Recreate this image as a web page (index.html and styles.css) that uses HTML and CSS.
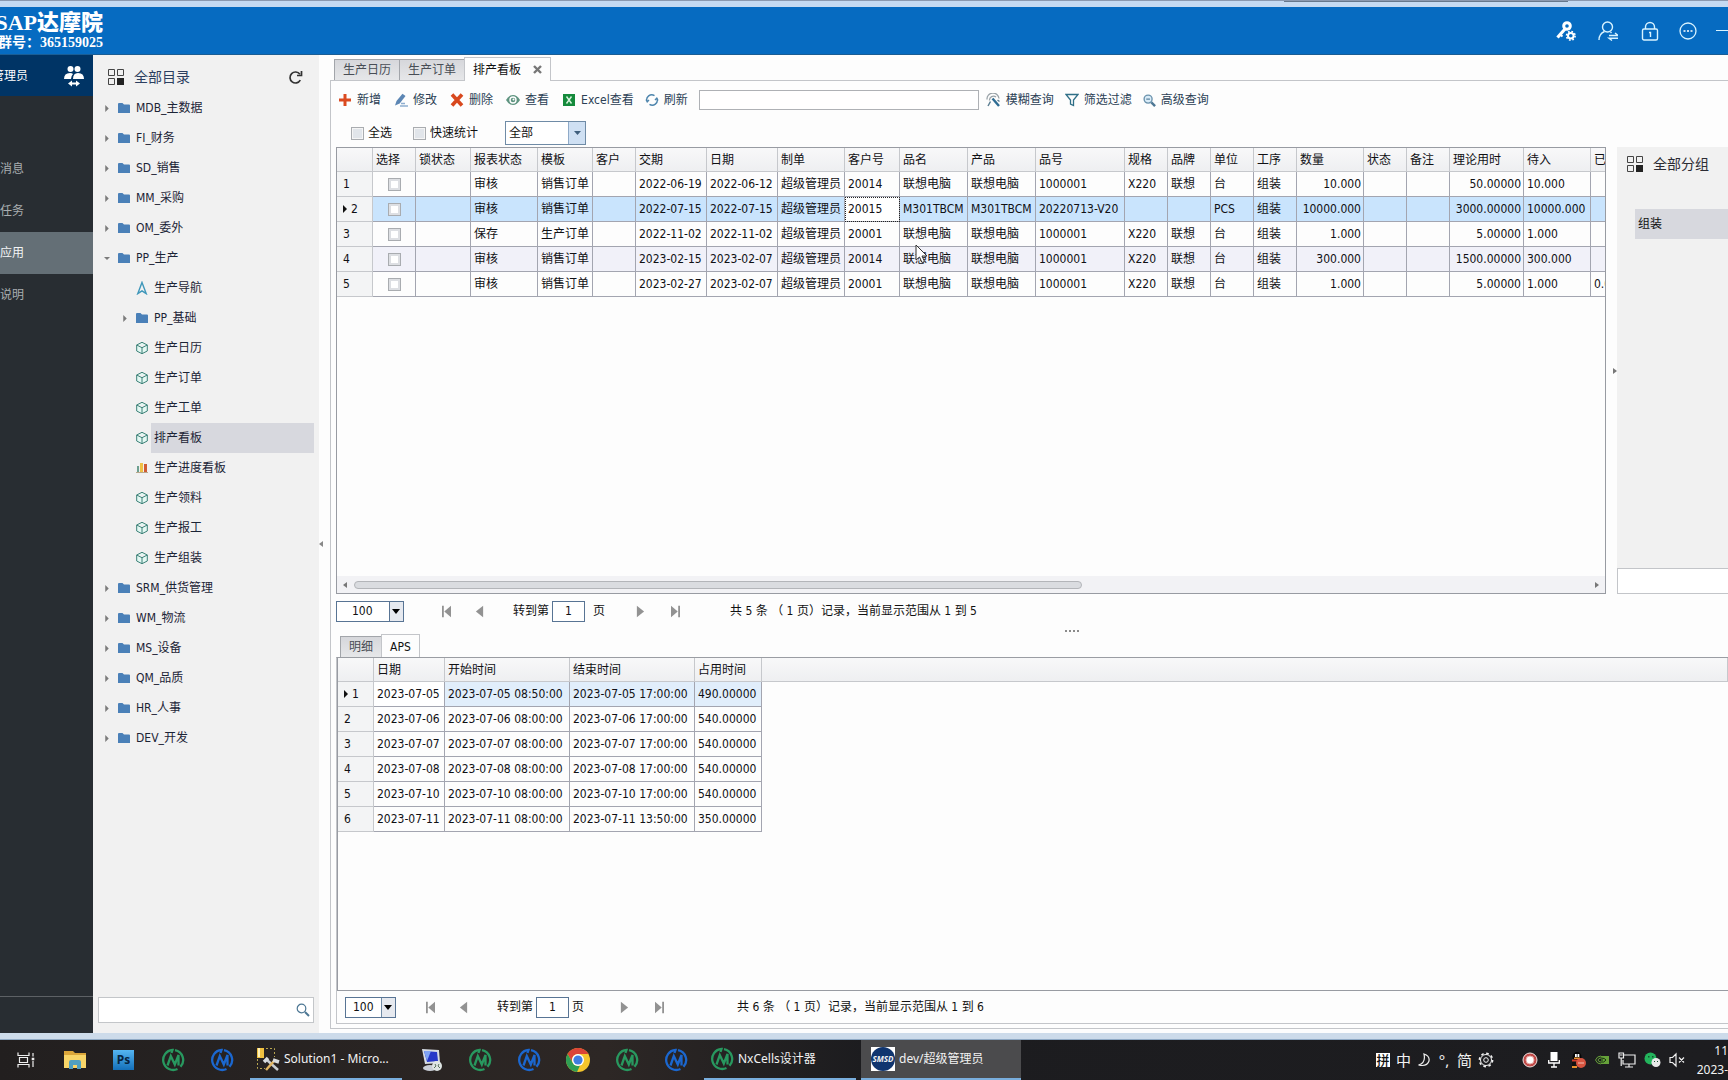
FILE: index.html
```html
<!DOCTYPE html>
<html lang="zh-CN">
<head>
<meta charset="utf-8">
<meta name="viewport" content="width=device-width, initial-scale=1">
<title>排产看板</title>
<link rel="stylesheet" href="styles.css">
</head>
<body>
<svg class="sprite" aria-hidden="true">
  <symbol id="folder" viewBox="0 0 12 12"><path fill="#4a80b8" d="M0 2q0-1 1-1h3.500l1.500 1.500h5q1 0 1 1V11H0z"/></symbol>
  <symbol id="caret" viewBox="0 0 5 8"><path fill="#7b7b7b" d="M.5 0 4.500 4 .5 8z"/></symbol>
  <symbol id="caret-down" viewBox="0 0 8 5"><path fill="#7b7b7b" d="M0 .5h8L4 4.500z"/></symbol>
  <symbol id="cube" viewBox="0 0 12 13"><path fill="#e4f8f3" stroke="#3b8077" d="M6 .8 11.300 3.500v6L6 12.200.7 9.500v-6zM.7 3.500 6 6.200l5.300-2.700M6 6.200v6"/></symbol>
  <symbol id="nav" viewBox="0 0 12 15"><path fill="none" stroke="#3f97ba" stroke-width="1.500" d="M6 1.500 10.500 13.500 6 10.500 1.500 13.500z"/></symbol>
  <symbol id="bars" viewBox="0 0 12 12"><path fill="#6d9f90" d="M1 4h2v6H1z"/><path fill="#efc146" d="M4 1h3v9H4z"/><path fill="#cf5b34" d="M8 2h3v8H8z"/><path fill="#b9a78b" d="M0 10h12v1H0z"/></symbol>
  <symbol id="blocks" viewBox="0 0 18 18"><path fill="none" stroke="#444" d="M1.500 1.500h6v6h-6zM10.500 1.500h6v6h-6zM1.500 10.500h6v6h-6z"/><path fill="#222" d="M10 10h7v7h-7z"/></symbol>
  <symbol id="glass" viewBox="0 0 14 14"><circle cx="5.500" cy="5.500" r="4.300" fill="none" stroke="#4d7794" stroke-width="1.200"/><path stroke="#4d7794" stroke-width="2" d="m9 9 4 4"/></symbol>
  <symbol id="first" viewBox="0 0 10 13"><path fill="#929292" d="M0 0h2v13H0zM10 0v13L2.500 6.500z"/></symbol>
  <symbol id="prev" viewBox="0 0 10 13"><path fill="#929292" d="M9 0v13L1 6.500z"/></symbol>
  <symbol id="next" viewBox="0 0 10 13"><path fill="#929292" d="M1 0v13l8-6.500z"/></symbol>
  <symbol id="last" viewBox="0 0 10 13"><path fill="#929292" d="M8 0h2v13H8zM0 0v13l7.500-6.500z"/></symbol>
  <symbol id="nx" viewBox="0 0 24 24"><path fill="none" stroke="currentColor" stroke-width="2.300" d="M16.500 21A10 10 0 1 1 11.500 2L10.500 5M14 2.200A10 10 0 0 1 19.500 18.800M6.500 17.500 9.800 8l4 8.500L17.500 7v10.500"/></symbol>
  <symbol id="gear" viewBox="0 0 16 16"><circle cx="8" cy="8" r="5.500" fill="none" stroke="currentColor"/><circle cx="8" cy="8" r="2.300" fill="none" stroke="currentColor"/><circle cx="8" cy="8" r="6.600" fill="none" stroke="currentColor" stroke-width="1.600" stroke-dasharray="2.590 2.590"/></symbol>
</svg>

<div class="window-edge"><span class="edge-shadow"></span></div>
<header class="titlebar">
  <div class="brand"><strong>SAP达摩院</strong><span>QQ群号：365159025</span></div>
  <div class="title-actions">
    <button aria-label="权限设置"><svg width="20" height="20" viewBox="0 0 20 20"><circle cx="11" cy="5" r="3.300" fill="none" stroke="#fff" stroke-width="3"/><path d="M9 8 1.500 16.500" stroke="#fff" stroke-width="3.200"/><path d="m3.500 13 3 2.500" stroke="#fff" stroke-width="2"/><circle cx="14.800" cy="14.800" r="5.800" fill="#066bc1"/><circle cx="14.800" cy="14.800" r="2.800" fill="none" stroke="#fff" stroke-width="2"/><circle cx="14.800" cy="14.800" r="4.300" fill="none" stroke="#fff" stroke-width="1.600" stroke-dasharray="1.690 1.690"/></svg></button>
    <button aria-label="切换用户"><svg width="20" height="20" viewBox="0 0 20 20" fill="none" stroke="#d8f3ff" stroke-width="1.400"><circle cx="9.500" cy="6" r="5"/><path d="M1 19q0-6 5.500-8.500M12.500 11l1 1M11 14.500h9l-3-2.500M20 17.200h-9l3 2.300"/></svg></button>
    <button aria-label="锁定"><svg width="18" height="20" viewBox="0 0 18 20" fill="none" stroke="#d8f3ff" stroke-width="1.400"><rect x="1.500" y="8" width="15" height="11" rx="1.500"/><path d="M4.500 8V6a4.500 4.500 0 0 1 9 0v2M8 11.500h1.500V16"/></svg></button>
    <button aria-label="更多"><svg width="18" height="18" viewBox="0 0 18 18"><circle cx="9" cy="9" r="8" fill="none" stroke="#d8f3ff" stroke-width="1.300"/><path fill="#fff" d="M4.500 8.200h2v1.600h-2zM8 8.200h2v1.600H8zM11.500 8.200h2v1.600h-2z"/></svg></button>
    <button class="minimize" aria-label="最小化"><i></i></button>
  </div>
</header>

<main class="shell">
  <nav class="rail">
    <div class="rail-user"><span>超级管理员</span><svg width="20" height="22" viewBox="0 0 20 22" fill="#fff"><circle cx="6.500" cy="4" r="3"/><circle cx="13.500" cy="4" r="3"/><path d="M0 14q0-6 6-6 2 0 3 1-2 2-2 5zM9 14q0-6 5-6 6 0 6 6z"/><path d="M4 18.500 8 15.500v2h4v-2l4 3-4 3v-2H8v2z"/></svg></div>
    <ul class="rail-list">
      <li><a href="#">我的消息</a></li>
      <li><a href="#">我的任务</a></li>
      <li><a href="#" class="active">我的应用</a></li>
      <li><a href="#">使用说明</a></li>
    </ul>
    <div class="rail-foot"></div>
  </nav>

  <aside class="catalog">
    <div class="catalog-head"><svg width="18" height="18"><use href="#blocks"/></svg><h2>全部目录</h2><button aria-label="刷新目录"><svg width="15" height="15" viewBox="0 0 15 15" fill="none" stroke="#333" stroke-width="1.700"><path d="M12.300 10.200a5.500 5.500 0 1 1-.4-6"/><path d="M13.500 1v4.500H9"/></svg></button></div>
    <ul class="tree">
      <li><a href="#"><svg class="arrow"><use href="#caret"/></svg><svg class="node"><use href="#folder"/></svg><span>MDB_主数据</span></a></li>
      <li><a href="#"><svg class="arrow"><use href="#caret"/></svg><svg class="node"><use href="#folder"/></svg><span>FI_财务</span></a></li>
      <li><a href="#"><svg class="arrow"><use href="#caret"/></svg><svg class="node"><use href="#folder"/></svg><span>SD_销售</span></a></li>
      <li><a href="#"><svg class="arrow"><use href="#caret"/></svg><svg class="node"><use href="#folder"/></svg><span>MM_采购</span></a></li>
      <li><a href="#"><svg class="arrow"><use href="#caret"/></svg><svg class="node"><use href="#folder"/></svg><span>OM_委外</span></a></li>
      <li><a href="#"><svg class="arrow"><use href="#caret-down"/></svg><svg class="node"><use href="#folder"/></svg><span>PP_生产</span></a>
        <ul>
          <li><a href="#"><i class="arrow"></i><svg class="node"><use href="#nav"/></svg><span>生产导航</span></a></li>
          <li><a href="#"><svg class="arrow"><use href="#caret"/></svg><svg class="node"><use href="#folder"/></svg><span>PP_基础</span></a></li>
          <li><a href="#"><i class="arrow"></i><svg class="node"><use href="#cube"/></svg><span>生产日历</span></a></li>
          <li><a href="#"><i class="arrow"></i><svg class="node"><use href="#cube"/></svg><span>生产订单</span></a></li>
          <li><a href="#"><i class="arrow"></i><svg class="node"><use href="#cube"/></svg><span>生产工单</span></a></li>
          <li><a href="#" class="selected"><i class="arrow"></i><svg class="node"><use href="#cube"/></svg><span>排产看板</span></a></li>
          <li><a href="#"><i class="arrow"></i><svg class="node"><use href="#bars"/></svg><span>生产进度看板</span></a></li>
          <li><a href="#"><i class="arrow"></i><svg class="node"><use href="#cube"/></svg><span>生产领料</span></a></li>
          <li><a href="#"><i class="arrow"></i><svg class="node"><use href="#cube"/></svg><span>生产报工</span></a></li>
          <li><a href="#"><i class="arrow"></i><svg class="node"><use href="#cube"/></svg><span>生产组装</span></a></li>
        </ul>
      </li>
      <li><a href="#"><svg class="arrow"><use href="#caret"/></svg><svg class="node"><use href="#folder"/></svg><span>SRM_供货管理</span></a></li>
      <li><a href="#"><svg class="arrow"><use href="#caret"/></svg><svg class="node"><use href="#folder"/></svg><span>WM_物流</span></a></li>
      <li><a href="#"><svg class="arrow"><use href="#caret"/></svg><svg class="node"><use href="#folder"/></svg><span>MS_设备</span></a></li>
      <li><a href="#"><svg class="arrow"><use href="#caret"/></svg><svg class="node"><use href="#folder"/></svg><span>QM_品质</span></a></li>
      <li><a href="#"><svg class="arrow"><use href="#caret"/></svg><svg class="node"><use href="#folder"/></svg><span>HR_人事</span></a></li>
      <li><a href="#"><svg class="arrow"><use href="#caret"/></svg><svg class="node"><use href="#folder"/></svg><span>DEV_开发</span></a></li>
    </ul>
    <div class="catalog-search"><input type="text" aria-label="搜索目录"><svg width="14" height="14"><use href="#glass"/></svg></div>
  </aside>

  <div class="splitter-v"><svg width="4" height="6" viewBox="0 0 4 6"><path fill="#888" d="M4 0v6L0 3z"/></svg></div>

  <section class="work">
    <div class="tabs">
      <button>生产日历</button><button>生产订单</button><button class="on">排产看板<svg width="9" height="9" viewBox="0 0 9 9"><path stroke="#777" stroke-width="2.400" d="m1 1 7 7M8 1 1 8"/></svg></button>
    </div>
    <div class="page">
      <div class="toolbar">
        <div class="tools">
          <button><svg width="14" height="14" viewBox="0 0 14 14"><path stroke="#db4a20" stroke-width="3" d="M7 1v12M1 7h12"/></svg>新增</button>
          <button><svg width="14" height="14" viewBox="0 0 14 14"><path fill="#5c86b4" d="M1 12.500 2.500 8 8.500.8l3 2.200-5.800 7.500z"/><path stroke="#8eaed0" stroke-width="1.500" d="M7 10.500h4M6 13h8"/></svg>修改</button>
          <button><svg width="14" height="14" viewBox="0 0 14 14"><path stroke="#d8481e" stroke-width="3.600" d="m2 1.500 10 11M12 1.500l-10 11"/></svg>删除</button>
          <button><svg width="14" height="14" viewBox="0 0 14 14"><path fill="#5f9480" d="M0 7q3-5 7-5t7 5q-3 5-7 5T0 7z"/><circle cx="7" cy="7" r="3" fill="#5f9480" stroke="#fff" stroke-width="1.400"/><circle cx="7.500" cy="6.500" r="1" fill="#fff"/></svg>查看</button>
          <button><svg width="14" height="14" viewBox="0 0 14 14"><path fill="#158a3c" d="M1 1h12v12H1z"/><path stroke="#d9f5df" stroke-width="1.400" d="m4.500 3.500 5 7M9.500 3.500l-5 7"/></svg>Excel查看</button>
        </div>
        <button><svg width="14" height="14" viewBox="0 0 14 14" fill="none" stroke="#4c84ac" stroke-width="1.400"><path d="M2 8.500A5 5 0 0 1 9.500 2.700M12 5.500A5 5 0 0 1 4.500 11.300M1 6.500l1.200 2.300L4 7M13 7.500l-1.200-2.300L10 7"/></svg>刷新</button>
        <input class="query" type="text" aria-label="查询内容">
        <button><svg width="15" height="14" viewBox="0 0 15 14"><path d="M1 6.500a6 6 0 0 1 12-1M3.500 7.500A4 4 0 0 1 10 4" fill="none" stroke="#9aa3a8" stroke-width="1.300"/><path d="m6.500 5.500 6.500 7.500" stroke="#2e6c93" stroke-width="2.400"/><path d="M4.500 8.500 2 13M11.500 7l2 1.500" stroke="#5c7f93" stroke-width="1.500"/></svg>模糊查询</button>
        <button><svg width="14" height="14" viewBox="0 0 14 14"><path fill="none" stroke="#2f6f87" stroke-width="1.300" d="M1 1.500h12L8.500 7v5.500L5.500 11V7z"/></svg>筛选过滤</button>
        <button><svg width="13" height="13" viewBox="0 0 14 14"><circle cx="5.500" cy="5.500" r="4.300" fill="#d9ecf8" stroke="#6c93ad" stroke-width="1.500"/><path stroke="#4d7794" stroke-width="1.200" d="M3.500 5.500h4"/><path stroke="#4d7794" stroke-width="2.600" d="m9 9 4 4"/></svg>高级查询</button>
      </div>
      <div class="options">
        <label><input type="checkbox">全选</label>
        <label><input type="checkbox">快速统计</label>
        <span class="combo scope"><select aria-label="范围"><option>全部</option></select><svg width="7" height="4" viewBox="0 0 7 4"><path fill="#3f5f7d" d="M0 0h7L3.500 4z"/></svg></span>
      </div>

      <div class="upper">
        <div class="grid">
          <div class="grid-view">
          <table class="orders">
            <colgroup><col class="w36"><col class="w43"><col class="w55"><col class="w67"><col class="w55"><col class="w43"><col class="w71"><col class="w71"><col class="w67"><col class="w55"><col class="w68"><col class="w68"><col class="w89"><col class="w43"><col class="w43"><col class="w43"><col class="w43"><col class="w67"><col class="w43"><col class="w43"><col class="w74"><col class="w67"><col class="w67"></colgroup>
            <thead><tr><th></th><th>选择</th><th>锁状态</th><th>报表状态</th><th>模板</th><th>客户</th><th>交期</th><th>日期</th><th>制单</th><th>客户号</th><th>品名</th><th>产品</th><th>品号</th><th>规格</th><th>品牌</th><th>单位</th><th>工序</th><th>数量</th><th>状态</th><th>备注</th><th>理论用时</th><th>待入</th><th>已入</th></tr></thead>
            <tbody>
              <tr><th>1</th><td class="c"><input type="checkbox" aria-label="选择第1行"></td><td></td><td>审核</td><td>销售订单</td><td></td><td>2022-06-19</td><td>2022-06-12</td><td>超级管理员</td><td>20014</td><td>联想电脑</td><td>联想电脑</td><td>1000001</td><td>X220</td><td>联想</td><td>台</td><td>组装</td><td class="r">10.000</td><td></td><td></td><td class="r">50.00000</td><td>10.000</td><td></td></tr>
              <tr class="current"><th><i class="pointer"></i>2</th><td class="c"><input type="checkbox" aria-label="选择第2行"></td><td></td><td>审核</td><td>销售订单</td><td></td><td>2022-07-15</td><td>2022-07-15</td><td>超级管理员</td><td class="focus">20015</td><td>M301TBCM</td><td>M301TBCM</td><td>20220713-V20</td><td></td><td></td><td>PCS</td><td>组装</td><td class="r">10000.000</td><td></td><td></td><td class="r">3000.00000</td><td>10000.000</td><td></td></tr>
              <tr><th>3</th><td class="c"><input type="checkbox" aria-label="选择第3行"></td><td></td><td>保存</td><td>生产订单</td><td></td><td>2022-11-02</td><td>2022-11-02</td><td>超级管理员</td><td>20001</td><td>联想电脑</td><td>联想电脑</td><td>1000001</td><td>X220</td><td>联想</td><td>台</td><td>组装</td><td class="r">1.000</td><td></td><td></td><td class="r">5.00000</td><td>1.000</td><td></td></tr>
              <tr class="hover"><th>4</th><td class="c"><input type="checkbox" aria-label="选择第4行"></td><td></td><td>审核</td><td>销售订单</td><td></td><td>2023-02-15</td><td>2023-02-07</td><td>超级管理员</td><td>20014</td><td>联想电脑</td><td>联想电脑</td><td>1000001</td><td>X220</td><td>联想</td><td>台</td><td>组装</td><td class="r">300.000</td><td></td><td></td><td class="r">1500.00000</td><td>300.000</td><td></td></tr>
              <tr><th>5</th><td class="c"><input type="checkbox" aria-label="选择第5行"></td><td></td><td>审核</td><td>销售订单</td><td></td><td>2023-02-27</td><td>2023-02-07</td><td>超级管理员</td><td>20001</td><td>联想电脑</td><td>联想电脑</td><td>1000001</td><td>X220</td><td>联想</td><td>台</td><td>组装</td><td class="r">1.000</td><td></td><td></td><td class="r">5.00000</td><td>1.000</td><td>0.000</td></tr>
            </tbody>
          </table>
          <svg class="cursor" width="14" height="20" viewBox="0 0 14 20"><path fill="#fff" stroke="#333" d="M1 1v15l3.500-3 2.500 5.500 2.500-1-2.500-5.500h5z"/></svg>
          </div>
          <div class="hscroll"><svg width="4" height="6" viewBox="0 0 4 6"><path fill="#777" d="M4 0v6L0 3z"/></svg><div class="track"><i></i></div><svg width="4" height="6" viewBox="0 0 4 6"><path fill="#777" d="M0 0v6l4-3z"/></svg></div>
        </div>
        <div class="collapse"><svg width="4" height="6" viewBox="0 0 4 6"><path fill="#777" d="M0 0v6l4-3z"/></svg></div>
        <aside class="groups">
          <div class="groups-head"><svg width="18" height="18"><use href="#blocks"/></svg><h2>全部分组</h2></div>
          <a href="#">组装</a>
          <input type="text" aria-label="搜索分组">
        </aside>
      </div>

      <div class="pager">
        <span class="combo size wide"><select aria-label="每页条数"><option>100</option></select><svg width="8" height="5" viewBox="0 0 8 5"><path d="M0 0h8L4 5z"/></svg></span>
        <button aria-label="首页"><svg><use href="#first"/></svg></button><button aria-label="上一页"><svg><use href="#prev"/></svg></button>
        <label class="spaced">转到第<input type="text" value="1">页</label>
        <button aria-label="下一页"><svg><use href="#next"/></svg></button><button aria-label="末页"><svg><use href="#last"/></svg></button>
        <span class="total">共 5 条 （ 1 页）记录，当前显示范围从 1 到 5</span>
      </div>
      <div class="splitter-h"><i></i><i></i><i></i><i></i></div>

      <div class="lower">
        <div class="tabs sub"><button>明细</button><button class="on">APS</button></div>
        <div class="lower-box">
          <div class="detail">
            <table class="aps">
              <colgroup><col class="w36"><col class="w71"><col class="w125"><col class="w125"><col class="w67"><col></colgroup>
              <thead><tr><th></th><th>日期</th><th>开始时间</th><th>结束时间</th><th>占用时间</th><th></th></tr></thead>
              <tbody>
                <tr class="soft"><th><i class="pointer"></i>1</th><td class="plain">2023-07-05</td><td>2023-07-05 08:50:00</td><td>2023-07-05 17:00:00</td><td>490.00000</td></tr>
                <tr><th>2</th><td>2023-07-06</td><td>2023-07-06 08:00:00</td><td>2023-07-06 17:00:00</td><td>540.00000</td></tr>
                <tr><th>3</th><td>2023-07-07</td><td>2023-07-07 08:00:00</td><td>2023-07-07 17:00:00</td><td>540.00000</td></tr>
                <tr><th>4</th><td>2023-07-08</td><td>2023-07-08 08:00:00</td><td>2023-07-08 17:00:00</td><td>540.00000</td></tr>
                <tr><th>5</th><td>2023-07-10</td><td>2023-07-10 08:00:00</td><td>2023-07-10 17:00:00</td><td>540.00000</td></tr>
                <tr><th>6</th><td>2023-07-11</td><td>2023-07-11 08:00:00</td><td>2023-07-11 13:50:00</td><td>350.00000</td></tr>
              </tbody>
            </table>
          </div>
          <div class="pager inset">
            <span class="combo size"><select aria-label="每页条数"><option>100</option></select><svg width="8" height="5" viewBox="0 0 8 5"><path d="M0 0h8L4 5z"/></svg></span>
            <button aria-label="首页"><svg><use href="#first"/></svg></button><button aria-label="上一页"><svg><use href="#prev"/></svg></button>
            <label>转到第<input type="text" value="1">页</label>
            <button aria-label="下一页"><svg><use href="#next"/></svg></button><button aria-label="末页"><svg><use href="#last"/></svg></button>
            <span class="total">共 6 条 （ 1 页）记录，当前显示范围从 1 到 6</span>
          </div>
        </div>
      </div>
    </div>
  </section>
</main>
<div class="window-foot"></div>

<footer class="taskbar">
  <button class="app" aria-label="任务视图"><svg width="18" height="16" viewBox="0 0 18 16" fill="none" stroke="#eee" stroke-width="1.200"><path d="M1 .5v3h11v-3M1 15.500v-3h11v3M2.500 5.500h8v5h-8zM16 1v3.500M16 9v6"/><path stroke-width="2.500" d="M14.700 7h2.600"/></svg></button>
  <button class="app" aria-label="文件资源管理器"><svg width="22" height="20" viewBox="0 0 22 20"><path fill="#dba63a" d="M0 1h9l2 2h11v5H0z"/><path fill="#f8d568" d="M0 5h22v13H0z"/><path fill="#4f9fc0" d="M5 19v-7q0-2 2-2h8q2 0 2 2v7h-4v-4H9v4z"/></svg></button>
  <button class="app" aria-label="Photoshop"><span class="ps">Ps</span></button>
  <button class="app green" aria-label="NxCells"><svg><use href="#nx"/></svg></button>
  <button class="app blue" aria-label="NxCells"><svg><use href="#nx"/></svg></button>
  <button class="app open"><svg width="24" height="24" viewBox="0 0 24 24"><path fill="#f0c040" d="M1 1h7v10H1z"/><path fill="#fff2b8" d="M2 1h2v9H2z"/><path fill="none" stroke="#b8a650" stroke-dasharray="2 2" d="M10 1.500h8.500V10M1.500 12v9.500H9"/><path stroke="#c9ced2" stroke-width="2.500" d="m11 13 11 10"/><path stroke="#e1b562" stroke-width="2.500" d="m10 23 8-9"/><path stroke="#d8dcdf" stroke-width="3.500" d="m8 15 4-4M17 13l6 2"/></svg><span>Solution1 - Micro...</span></button>
  <button class="app" aria-label="远程桌面"><svg width="24" height="24" viewBox="0 0 24 24"><path fill="#d5dbe3" d="m3 1 17 1 1 13-15 1z"/><path fill="#2638c8" d="m5 3 13 1 1 9-11 1z"/><path fill="#7fa3f4" d="m5 3 7 0-4 10z"/><ellipse cx="11" cy="20" rx="7" ry="3" fill="#c9ced6"/><circle cx="18" cy="18" r="5" fill="#dfe5e4"/><path fill="none" stroke="#56705c" d="m15 20 2-2-1-2M20 16l-1 2 2 2"/></svg></button>
  <button class="app green" aria-label="NxCells"><svg><use href="#nx"/></svg></button>
  <button class="app blue" aria-label="NxCells"><svg><use href="#nx"/></svg></button>
  <button class="app" aria-label="Chrome"><svg width="24" height="24" viewBox="0 0 24 24"><circle cx="12" cy="12" r="12" fill="#f5c52c"/><path fill="#db4437" d="M1.600 6A12 12 0 0 1 22.400 6H12a6 6 0 0 0-5.500 8.500z"/><path fill="#2f9e54" d="M1.600 6l5.200 9A6 6 0 0 0 14 17.600L11 24A12 12 0 0 1 1.600 6z"/><circle cx="12" cy="12" r="6" fill="#fff"/><circle cx="12" cy="12" r="4.600" fill="#3f7de0"/></svg></button>
  <button class="app green" aria-label="NxCells"><svg><use href="#nx"/></svg></button>
  <button class="app blue" aria-label="NxCells"><svg><use href="#nx"/></svg></button>
  <button class="app open green"><svg><use href="#nx"/></svg><span>NxCells设计器</span></button>
  <button class="app open focused"><span class="badge"><span>SMSD</span></span><span>dev/超级管理员</span></button>
  <div class="ime"><b>拼</b><span>中</span><svg width="14" height="14" viewBox="0 0 14 14"><path fill="none" stroke="#eee" stroke-width="1.200" d="M7 1q6 2 5 7-2 6-10.500 4Q9 10 7 1z"/></svg><span>°,</span><span>简</span><svg width="16" height="16"><use href="#gear"/></svg></div>
  <div class="tray">
    <svg width="16" height="16" viewBox="0 0 16 16"><circle cx="8" cy="8" r="7" fill="#c14a48" stroke="#eee1df"/><circle cx="8" cy="8" r="4" fill="#fff" stroke="#e9a9a5"/></svg>
    <svg width="16" height="16" viewBox="0 0 16 16"><path fill="#fff" d="M4.500 0h7v9h-7z"/><path fill="none" stroke="#fff" stroke-width="1.300" d="M2.700 8v3h10.600V8M8 11v4M5 15h6"/></svg>
    <svg width="16" height="16" viewBox="0 0 16 16"><ellipse cx="7" cy="5" rx="4.500" ry="5" fill="#050505"/><path fill="#111" d="M2 8h10v6H2z"/><path fill="#fff" d="M5 2h1.800v3H5zM7.500 2h1.800v3H7.500z"/><path fill="#e8912d" d="M4 5.500h6V7H4zM2 14h5v2H2z"/><path fill="#d33c2c" d="M2 7.500h9v2H2z"/><circle cx="11" cy="11" r="5" fill="#d75440"/><path stroke="#f3c0b4" d="M8 11h6"/></svg>
    <svg width="16" height="16" viewBox="0 0 16 16"><path fill="#67a23a" d="M7 4h8v8H7z"/><path fill="none" stroke="#67a23a" d="M7 4Q3 4 1.500 8 3 12 7 12M7 6Q4.500 6 4 8q.5 2 3 2"/><path fill="none" stroke="#173010" d="M7 6q4 0 5 2-2 3-5 2M7 8h2"/></svg>
    <svg width="18" height="16" viewBox="0 0 18 16" fill="none" stroke="#eee" stroke-width="1.200"><path d="M6 3h11v9H5V8M11 12v3M7 15h8M1 1h4.500v5H1zM3.200 6v8M2 3h2.500"/></svg>
    <svg width="17" height="16" viewBox="0 0 17 16"><circle cx="6.500" cy="6.500" r="6" fill="#23b45c"/><circle cx="12" cy="10.500" r="4.500" fill="#e8e8e8"/><path fill="#14522e" d="M4 4h1.500v1.500H4zM8 4h1.500v1.500H8zM10 9h1v1h-1zM13 9h1v1h-1z"/></svg>
    <svg width="16" height="16" viewBox="0 0 16 16" fill="none" stroke="#eee" stroke-width="1.200"><path d="M1 5.500h2.500L7 2v12l-3.500-3.500H1zM10 5.500l5 5M15 5.500l-5 5"/></svg>
  </div>
  <div class="clock"><time>11</time><time>2023-</time></div>
</footer>
</body>
</html>
```
FILE: styles.css
```css
* { box-sizing: border-box; }
html, body { height: 100%; margin: 0; }
body {
  display: flex;
  flex-direction: column;
  overflow: hidden;
  background: #fdfdfd;
  color: #111;
  font: 12px/16px "DejaVu Sans Condensed", "DejaVu Sans", "Noto Sans CJK SC", sans-serif;
}
button, input, select { font: inherit; color: inherit; margin: 0; }
button { border: 0; background: none; padding: 0; display: flex; align-items: center; white-space: nowrap; }
a { color: inherit; text-decoration: none; }
ul { list-style: none; margin: 0; padding: 0; }
h2 { font-size: 14px; font-weight: 400; line-height: 20px; margin: 0; white-space: nowrap; }
svg { flex: none; display: block; }
.sprite { position: absolute; width: 0; height: 0; }

/* Window frame */
.window-edge { flex: none; height: 7px; background: #c4daf2; border-top: 1px solid #8a99b0; display: flex; justify-content: flex-end; padding-right: 160px; }
.edge-shadow { width: 284px; height: 1px; background: #65788d; }
.window-foot { flex: none; height: 7px; background: #cddbea; border-bottom: 1px solid #8fa9c4; }
.titlebar { flex: none; height: 48px; background: #066bc1; border-bottom: 1px solid #1a5d94; display: flex; justify-content: space-between; align-items: center; color: #fff; overflow: hidden; }
.brand { width: 103px; display: flex; flex-direction: column; align-items: flex-end; font-family: "Liberation Serif", "Noto Sans CJK SC", serif; font-weight: 700; white-space: nowrap; }
.brand strong { font-size: 22px; line-height: 24px; }
.brand span { font-size: 14px; line-height: 16px; }
.title-actions { display: flex; align-items: center; gap: 22px; }
.title-actions button { width: 20px; height: 24px; justify-content: center; }
.title-actions button:nth-last-child(-n+2) { margin-left: -4px; }
.title-actions .minimize { width: 12px; }
.minimize i { width: 12px; height: 1px; background: #d8f3ff; }

.shell { flex: 1; min-height: 0; display: flex; }

/* Left rail */
.rail { width: 93px; flex: none; background: #282d32; color: #a9adb0; display: flex; flex-direction: column; overflow: hidden; }
.rail-user { height: 41px; background: #003465; color: #fff; display: flex; align-items: center; justify-content: flex-end; gap: 36px; padding-right: 9px; white-space: nowrap; }
.rail-list { margin-top: 52px; flex: 1; }
.rail-list a { display: flex; align-items: center; justify-content: flex-end; height: 42px; padding-right: 69px; white-space: nowrap; }
.rail-list .active { background: #646f76; color: #f3f4f5; }
.rail-foot { height: 37px; border-top: 1px solid #5d6165; }

/* Catalog tree */
.catalog { width: 226px; flex: none; background: #f1f1f1; display: flex; flex-direction: column; padding: 0 5px 10px; color: #1c2436; }
.catalog-head { display: flex; align-items: center; height: 38px; margin-top: 3px; padding: 0 11px 0 9px; gap: 9px; }
.catalog-head h2 { flex: 1; color: #2c3f60; }
.tree { flex: 1; margin-top: -3px; }
.tree a { display: flex; align-items: center; height: 30px; padding-left: 6px; white-space: nowrap; }
.tree ul a { padding-left: 24px; }
.tree .arrow { width: 6px; height: 7px; margin-right: 8px; }
.tree .node { width: 12px; height: 14px; margin-right: 3px; }
.tree span { flex: 1; line-height: 30px; padding-left: 3px; }
.tree .selected span { background: #d7d8de; }
.catalog-search { display: flex; align-items: center; height: 26px; border: 1px solid #c3c6c9; background: #fff; padding-right: 3px; }
.catalog-search input { flex: 1; min-width: 0; border: 0; background: none; outline: 0; }
.splitter-v { width: 11px; flex: none; display: flex; align-items: center; }

/* Workspace */
.work { flex: 1; min-width: 0; display: flex; flex-direction: column; padding: 2px 0 4px; }
.tabs { display: flex; align-items: flex-end; height: 24px; padding-left: 4px; flex: none; border-bottom: 1px solid #c3c5c9; }
.tabs button { height: 21px; padding: 0 8px; border: 1px solid #a2a5aa; border-width: 1px 1px 0; background: linear-gradient(#d6d7db, #e6e7e9); color: #484d55; }
.tabs button + button { margin-left: -1px; }
.tabs .on { height: 24px; margin-bottom: -1px; background: #fdfdfd; border-color: #c3c5c9; color: #111; gap: 12px; }
.page { flex: 1; min-height: 0; display: flex; flex-direction: column; border: 1px solid #c3c5c9; border-width: 0 0 1px 1px; padding: 0 0 4px 5px; }
.toolbar { display: flex; align-items: center; gap: 11px; height: 38px; padding-left: 2px; color: #2b3f55; flex: none; }
.tools { display: flex; gap: 13px; }
.toolbar button { gap: 5px; }
.query { width: 280px; height: 20px; border: 1px solid #aeb1b5; background: #fff; outline: 0; margin-right: -4px; }
.options { display: flex; align-items: center; height: 28px; padding-left: 15px; flex: none; }
.options label { display: flex; align-items: center; gap: 4px; margin-right: 21px; }
input[type="checkbox"] { appearance: none; width: 13px; height: 13px; border: 1px solid #a9acb0; background: #fff; box-shadow: inset 0 0 0 2px #dddfe3; flex: none; }
.options input[type="checkbox"] { background: #e1e5ea; box-shadow: inset 0 0 0 1px #f5f5f5; }
.combo { position: relative; display: inline-flex; flex: none; }
.combo select { appearance: none; border: 1px solid #6f8ba6; border-radius: 0; background: #fff; outline: 0; }
.combo svg { position: absolute; pointer-events: none; }
.scope { margin-left: 6px; }
.scope select { width: 81px; height: 24px; padding-left: 3px; background: linear-gradient(90deg, #fff 62px, #8faac8 62px, #8faac8 63px, #cfe0f3 63px); }
.scope svg { right: 5px; top: 10px; }

.upper { flex: 448 1 0; min-height: 0; display: flex; }
.grid { flex: 1; min-width: 0; border: 1px solid #989ba2; display: flex; flex-direction: column; }
.grid-view { flex: 1; min-height: 0; overflow: hidden; position: relative; }
.cursor { position: absolute; left: 578px; top: 96px; }
table { table-layout: fixed; border-collapse: separate; border-spacing: 0; color: #101014; }
.orders { width: 1321px; }
.aps { width: 100%; }
.w36 { width: 36px; } .w43 { width: 43px; } .w55 { width: 55px; } .w67 { width: 67px; }
.w68 { width: 68px; } .w71 { width: 71px; } .w74 { width: 74px; } .w89 { width: 89px; } .w125 { width: 125px; }
th, td { height: 25px; padding: 0 0 0 3px; text-align: left; font-weight: 400; border: 1px solid #a3a5b0; border-width: 0 1px 1px 0; white-space: nowrap; overflow: hidden; line-height: 16px; }
thead th { height: 24px; background: linear-gradient(#f8f8f9, #eeeff1); border-color: #c6c8cc; }
tbody th { padding-left: 6px; background: #f3f4f5; border-color: #c6c8cc; }
.c { text-align: center; padding: 0; }
.c input { display: block; margin: 0 auto; }
td.r { text-align: right; padding: 0 2px 0 0; }
.current td { background: #c9e4fd; }
.current .focus { background: #fff; outline: 1px dotted #222; outline-offset: -1px; }
.hover td { background: #f1f1f9; }
.soft td { background: #e1eefb; }
.soft .plain { background: #fff; }
.pointer { display: inline-block; border: 4px solid transparent; border-left-color: #111; border-right: 0; margin-right: 4px; }
.hscroll { display: flex; align-items: center; justify-content: space-between; height: 17px; flex: none; background: #f2f2f5; padding: 0 6px; }
.track { flex: 1; margin: 0 7px; }
.track i { display: block; width: 59%; height: 8px; border: 1px solid #b3b5b9; border-radius: 4px; background: #dadce0; }
.collapse { width: 11px; flex: none; display: flex; align-items: center; justify-content: flex-end; }
.groups { width: 111px; flex: none; display: flex; flex-direction: column; background: #f1f1f1; }
.groups-head { display: flex; align-items: center; gap: 9px; height: 34px; padding-left: 9px; color: #2c2c34; }
.groups a { margin: 28px 0 auto 18px; padding-left: 3px; line-height: 30px; background: #d7d8de; }
.groups input { width: 100%; height: 26px; border: 1px solid #c3c5c9; border-right: 0; background: #fff; outline: 0; }

.pager { display: flex; align-items: center; flex: none; height: 34px; }
.size select { width: 51px; height: 21px; padding-left: 7px; background: linear-gradient(90deg, #fff 35px, #6f8ba6 35px, #6f8ba6 36px, #e6e9ef 36px); border-color: #587494; }
.size.wide select { width: 68px; padding-left: 15px; background: linear-gradient(90deg, #fff 52px, #587494 52px, #587494 53px, #e6e9ef 53px); }
.size svg { right: 4px; top: 8px; }
.pager button { margin-left: 24px; }
.pager button svg { width: 9px; height: 13px; }
.pager .size + button { margin-left: 30px; }
.pager .wide + button { margin-left: 38px; }
.pager label { display: flex; align-items: center; margin: 0 10px 0 29px; gap: 3px; }
.pager label input { width: 33px; height: 21px; border: 1px solid #587494; background: #fff; text-align: center; padding: 0; outline: 0; }
.pager .spaced { margin-right: 5px; }
.spaced input { margin-right: 5px; }
.pager button:nth-of-type(n+3) { margin-left: 26px; }
.total { margin-left: 50px; white-space: nowrap; }
.pager.inset .total { margin-left: 73px; }
.splitter-h { display: flex; justify-content: center; align-items: center; gap: 2px; height: 5px; flex: none; padding-left: 80px; }
.splitter-h i { width: 2px; height: 2px; background: #8b8b8b; }

.lower { flex: 391 1 0; min-height: 0; display: flex; flex-direction: column; }
.sub { border: 0; }
.lower-box { flex: 1; min-height: 0; display: flex; flex-direction: column; border: 1px solid #c3c5c9; border-right: 0; border-top-color: #9a9da3; }
.detail { flex: 1; min-height: 0; border: 1px solid #989ba2; border-width: 0 0 1px 1px; overflow: hidden; }
.inset { height: 32px; padding-left: 8px; }

/* Taskbar */
.taskbar { flex: none; height: 40px; display: flex; padding-left: 1px; background: linear-gradient(90deg, #221f1f, #2d2725 35%, #1c1c1f 50%, #1d1d20); color: #f2f2f2; overflow: hidden; font-family: "Noto Sans", "Noto Sans CJK SC", sans-serif; font-size: 12px; }
.app { width: 49px; flex: none; justify-content: center; gap: 4px; }
.app svg:not([width]) { width: 24px; height: 24px; }
.green svg { color: #28985f; }
.blue svg { color: #1b67cf; }
.open { width: 152px; justify-content: flex-start; padding-left: 6px; border-bottom: 2px solid #79aedd; margin: 0 4px; }
.open + .open { margin-left: 1px; }
.focused { width: 160px; padding-left: 10px; background: #4b4b4d; }
.ps { width: 21px; height: 20px; background: linear-gradient(#55b5f2, #146fb9); color: #06233f; font-weight: 700; line-height: 20px; }
.badge { width: 24px; height: 24px; background: #fff; }
.badge span { display: block; height: 24px; border-radius: 12px; background: #10356f; font-size: 8px; line-height: 24px; font-weight: 700; font-style: italic; text-align: center; }
.ime { margin-left: auto; display: flex; align-items: center; gap: 6px; font-size: 15px; }
.ime span { min-width: 14px; text-align: center; }
.ime b { width: 14px; line-height: 14px; font-size: 13px; font-weight: 500; background: #fff; color: #111; text-align: center; }
.tray { display: flex; align-items: center; gap: 8px; margin: 0 12px 0 28px; }
.clock { width: 31px; display: flex; flex-direction: column; align-items: flex-end; justify-content: center; line-height: 19px; white-space: nowrap; }
```
